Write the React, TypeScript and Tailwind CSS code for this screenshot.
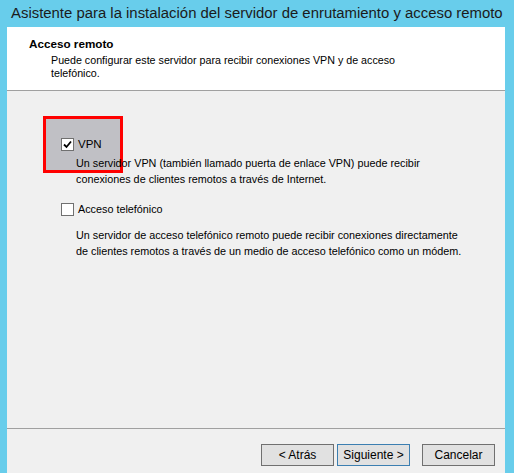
import React from "react";

const font = { fontFamily: '"Liberation Sans", Arial, sans-serif' };

function Check({ checked }: { checked?: boolean }) {
  return (
    <div className="w-[13px] h-[13px] border border-[#707070] bg-white flex items-center justify-center shrink-0">
      {checked && (
        <svg width="9" height="9" viewBox="0 0 9 9">
          <path d="M1 4.5 L3.5 7 L8 1.5" stroke="#000" strokeWidth="1.8" fill="none" />
        </svg>
      )}
    </div>
  );
}

function Btn({ children, primary }: { children: React.ReactNode; primary?: boolean }) {
  return (
    <div
      className={`w-[73px] h-[22px] flex items-center justify-center text-[12px] text-black bg-[#e1e1e1] border ${
        primary ? "border-[#3c7fb1]" : "border-[#707070]"
      }`}
    >
      {children}
    </div>
  );
}

export default function App() {
  return (
    <div className="w-[514px] h-[473px] bg-[#68cdeb] flex flex-col overflow-hidden" style={font}>
      <div className="h-[27px] pl-[11px] flex items-center text-[14.9px] text-[#1b1b1b] whitespace-nowrap">
        Asistente para la instalación del servidor de enrutamiento y acceso remoto
      </div>
      <div className="flex-1 ml-[7px] mr-[9px] flex flex-col bg-[#f0f0f0]">
        <div className="h-[64px] bg-white border-b border-[#a0a0a0] pl-[22px] pt-[10px] leading-[13px] text-black">
          <div className="font-bold text-[11.7px]">Acceso remoto</div>
          <div className="pl-[22px] pt-[4px] whitespace-nowrap text-[10.7px]">
            Puede configurar este servidor para recibir conexiones VPN y de acceso
            <br />
            telefónico.
          </div>
        </div>
        <div className="flex-1 relative text-[10.8px] leading-[16px] text-black">
          <div className="absolute left-[36px] top-[25px] w-[80px] h-[57px] bg-[#a0a0a8]/60 border-[3px] border-[#ff0000]" />
          <div className="pl-[54px] pt-[45px] relative">
            <div className="flex items-center gap-[4px]">
              <Check checked />
              <span className="text-[11.5px]">VPN</span>
            </div>
            <div className="pl-[15px] pt-[3px] whitespace-nowrap">
              Un servidor VPN (también llamado puerta de enlace VPN) puede recibir
              <br />
              conexiones de clientes remotos a través de Internet.
            </div>
            <div className="flex items-center gap-[4px] pt-[14px]">
              <Check />
              <span>Acceso telefónico</span>
            </div>
            <div className="pl-[15px] pt-[10px] whitespace-nowrap">
              Un servidor de acceso telefónico remoto puede recibir conexiones directamente
              <br />
              de clientes remotos a través de un medio de acceso telefónico como un módem.
            </div>
          </div>
        </div>
        <div className="h-[45px] border-t border-[#a0a0a0] flex items-start pt-[15px] pl-[254px]">
          <Btn>&lt; Atrás</Btn>
          <div className="w-[3px]" />
          <Btn primary>Siguiente &gt;</Btn>
          <div className="w-[12px]" />
          <Btn>Cancelar</Btn>
        </div>
      </div>
    </div>
  );
}
